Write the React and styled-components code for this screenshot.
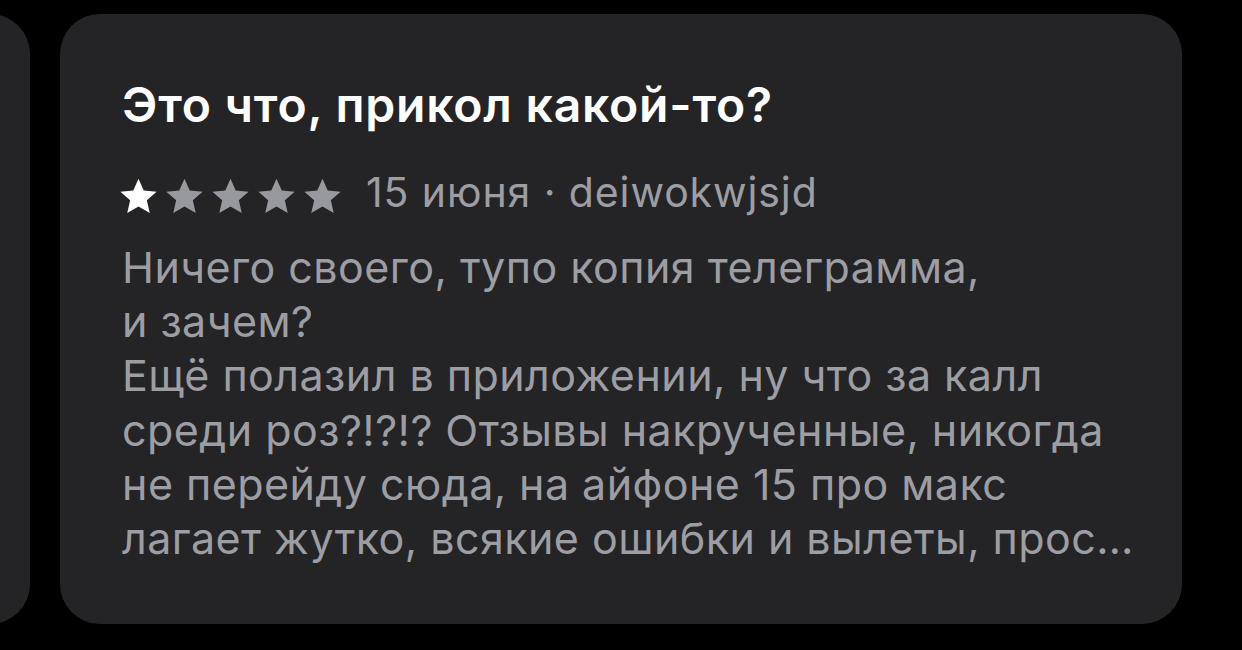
import React from 'react';
import styled, { createGlobalStyle } from 'styled-components';

const GlobalStyle = createGlobalStyle`
    html, body {
        margin: 0;
        padding: 0;
        background: #000;
    }
    body {
        font-family: Inter, "Noto Sans", sans-serif;
        -webkit-font-smoothing: antialiased;
    }
`;

const review = {
    title: 'Это что, прикол какой-то?',
    rating: 1,
    date: '15 июня',
    author: 'deiwokwjsjd',
    lines: [
        'Ничего своего, тупо копия телеграмма,',
        'и зачем?',
        'Ещё полазил в приложении, ну что за калл',
        'среди роз?!?!? Отзывы накрученные, никогда',
        'не перейду сюда, на айфоне 15 про макс',
        'лагает жутко, всякие ошибки и вылеты, прос…',
    ],
};

const Star = ({ filled }) => (
    <StarIcon viewBox="0 0 24 24" $filled={filled}>
        <path d="M12 1.6l3.05 6.95 7.55.7-5.72 5 1.7 7.4L12 17.8l-6.58 3.85 1.7-7.4-5.72-5 7.55-.7z" />
    </StarIcon>
);

const ReviewCard = ({ data }) => (
    <Card>
        <Title>{data.title}</Title>
        <Meta>
            <Stars>
                {[1, 2, 3, 4, 5].map((n) => (
                    <Star key={n} filled={n <= data.rating} />
                ))}
            </Stars>
            <MetaText>
                {data.date} · {data.author}
            </MetaText>
        </Meta>
        <Body>
            {data.lines.map((line, i) => (
                <Line key={i}>{line}</Line>
            ))}
        </Body>
    </Card>
);

const App = () => (
    <>
        <GlobalStyle />
        <Carousel>
            <SideCard />
            <ReviewCard data={review} />
            <SideCard />
        </Carousel>
    </>
);

const Carousel = styled.div`
    display: grid;
    grid-template-columns: 90px 1122px 90px;
    column-gap: 30px;
    margin-left: -60px;
    padding-top: 14px;
    height: 650px;
    box-sizing: border-box;
    overflow: hidden;
    width: 1242px;
`;

const SideCard = styled.div`
    height: 610px;
    border-radius: 40px;
    background: #242426;
`;

const Card = styled.div`
    height: 610px;
    box-sizing: border-box;
    border-radius: 40px;
    background: #242426;
    padding: 67px 62px 0;
    display: flex;
    flex-direction: column;
`;

const Title = styled.div`
    color: #fff;
    font-size: 48px;
    font-weight: 600;
    line-height: 48px;
    letter-spacing: 0.8px;
`;

const Meta = styled.div`
    display: flex;
    align-items: center;
    margin-top: 39px;
    height: 48px;
`;

const Stars = styled.div`
    display: flex;
    gap: 5px;
    margin-left: -4px;
    margin-top: 8px;
`;

const StarIcon = styled.svg`
    width: 41px;
    height: 41px;
    fill: ${(p) => (p.$filled ? '#ffffff' : '#98989f')};
`;

const MetaText = styled.span`
    margin-left: 23px;
    color: #9d9da4;
    font-size: 41px;
    line-height: 48px;
    letter-spacing: 0.9px;
`;

const Body = styled.div`
    margin-top: 24px;
    color: #9d9da4;
    font-size: 43px;
    line-height: 54.2px;
    letter-spacing: 0.45px;
`;

const Line = styled.div`
    white-space: nowrap;
`;

export default App;
